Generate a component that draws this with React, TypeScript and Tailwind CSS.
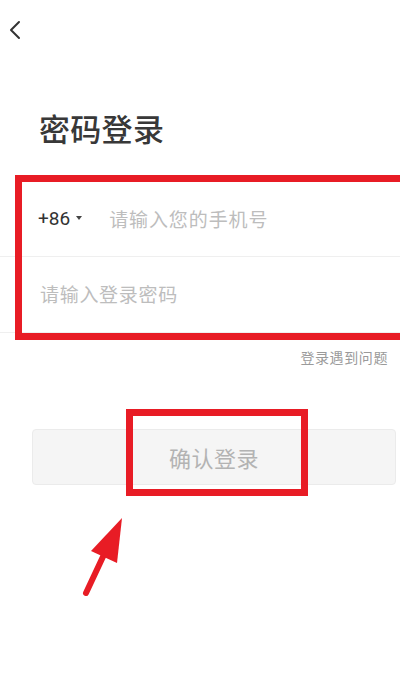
import React from "react";

export default function App() {
  const font = { fontFamily: '"Noto Sans CJK SC", "Noto Sans", Roboto, sans-serif' };
  return (
    <div className="relative w-[400px] h-[689px] bg-white overflow-hidden" style={font}>
      {/* header */}
      <div className="h-[60px] flex items-center pl-[8px]">
        <svg width="14" height="20" viewBox="0 0 14 20">
          <polyline points="11,2 3,10 11,18" fill="none" stroke="#333" strokeWidth="2" strokeLinecap="round" strokeLinejoin="round" />
        </svg>
      </div>

      {/* title */}
      <div className="mt-[48px] pl-[39px] text-[31px] leading-[40px] tracking-[0.3px] font-medium text-[#383838]">密码登录</div>

      {/* form */}
      <div className="mt-[34px]">
        <div className="h-[75px] border-b border-[#efefef] flex items-center pl-[38px]">
          <span className="text-[19px] text-[#333]" style={{ fontFamily: 'Roboto, "Noto Sans", sans-serif' }}>+86</span>
          <svg width="6" height="4" viewBox="0 0 6 4" className="ml-[6px] mb-[2px]">
            <polygon points="0,0 6,0 3,4" fill="#444" />
          </svg>
          <span className="ml-[27px] text-[19px] tracking-[0.9px] text-[#bdbdbd]">请输入您的手机号</span>
        </div>
        <div className="h-[76px] border-b border-[#efefef] flex items-center pl-[40px]">
          <span className="text-[19px] tracking-[0.7px] text-[#bdbdbd]">请输入登录密码</span>
        </div>
      </div>

      <div className="mt-[14px] flex justify-end pr-[12px]">
        <span className="text-[14px] leading-[20px] tracking-[0.6px] text-[#9a9a9a]">登录遇到问题</span>
      </div>

      {/* button */}
      <div className="mt-[62px] ml-[32px] mr-[4px] h-[56px] rounded-[4px] bg-[#f5f5f5] border border-[#ebebeb] flex items-center justify-center">
        <span className="text-[22px] tracking-[0.5px] text-[#b3b3b3]">确认登录</span>
      </div>

      {/* annotations */}
      <div className="absolute left-[15px] top-[175px] w-[392px] h-[165px] border-[7px] border-[#e81c25]" />
      <div className="absolute left-[126px] top-[409px] w-[182px] h-[87px] border-[7px] border-[#e81c25]" />
      <svg className="absolute left-0 top-0" width="400" height="689" viewBox="0 0 400 689">
        <line x1="86" y1="593" x2="108" y2="546" stroke="#e81c25" strokeWidth="6" strokeLinecap="round" />
        <polygon points="122,518 91,551 117,563" fill="#e81c25" />
      </svg>
    </div>
  );
}
